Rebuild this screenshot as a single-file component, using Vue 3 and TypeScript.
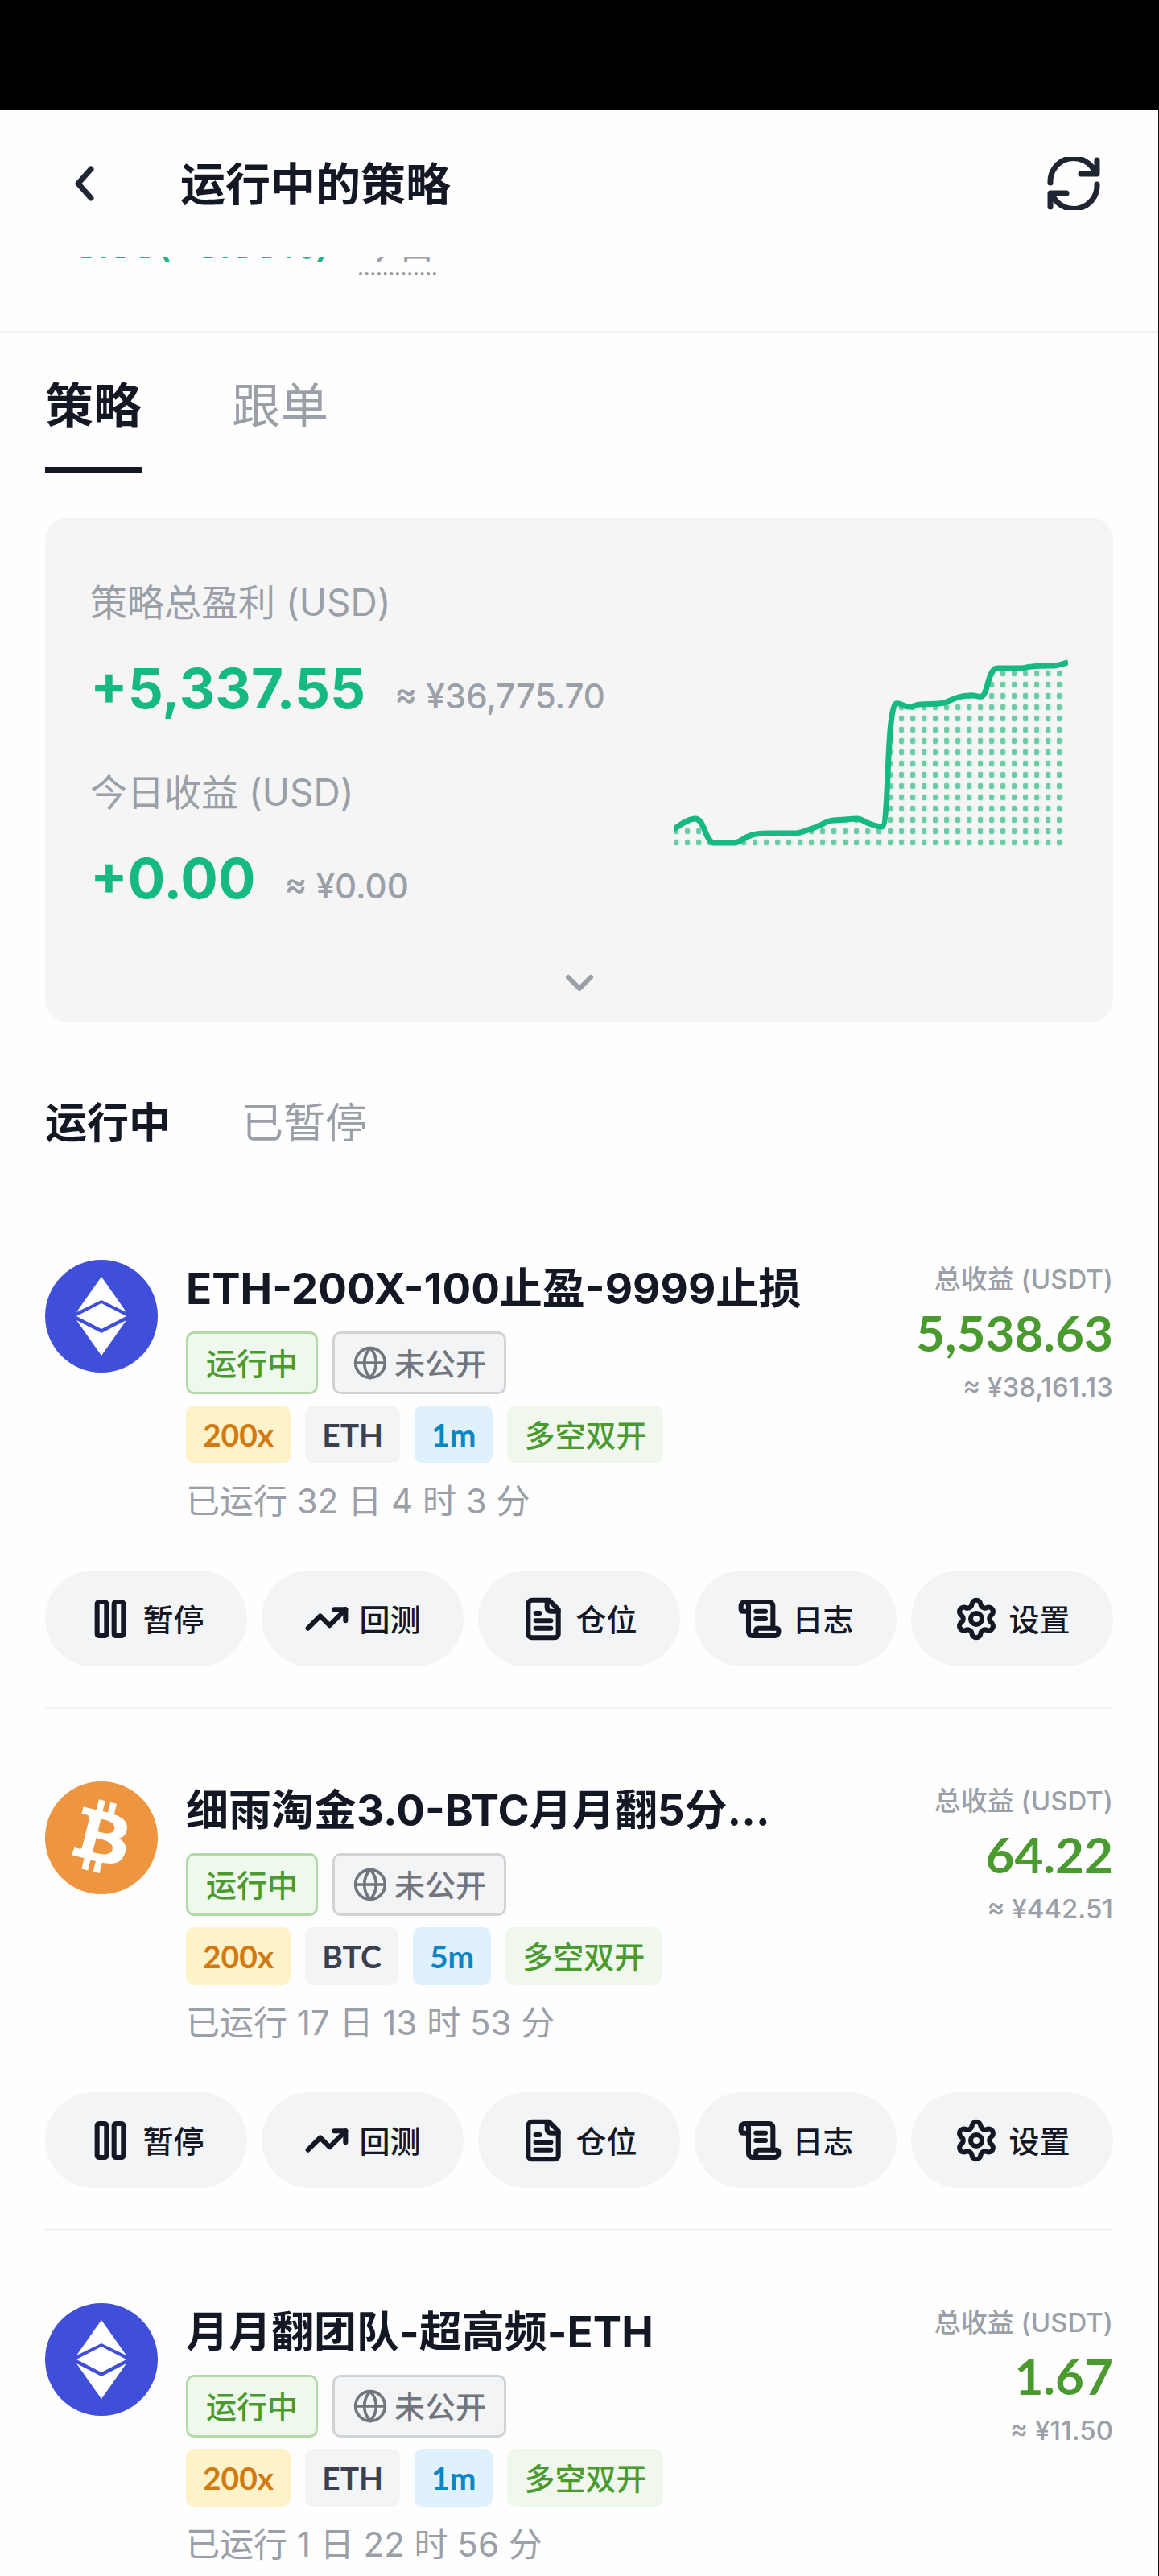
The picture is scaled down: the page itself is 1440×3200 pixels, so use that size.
<script setup lang="ts">
import { ref } from 'vue'

type Coin = 'ETH' | 'BTC'

interface Strategy {
  name: string
  coin: Coin
  leverage: string
  period: string
  runtime: string
  profit: string
  cny: string
  showActions: boolean
}

interface Action {
  label: string
  paths: string[]
}

const mainTabs = ['策略', '跟单']
const stateTabs = ['运行中', '已暂停']
const mainTab = ref('策略')
const stateTab = ref('运行中')

const totals = [
  { label: '策略总盈利 (USD)', value: '+5,337.55', cny: '≈ ¥36,775.70' },
  { label: '今日收益 (USD)', value: '+0.00', cny: '≈ ¥0.00' },
]

const strategies: Strategy[] = [
  {
    name: 'ETH-200X-100止盈-9999止损',
    coin: 'ETH',
    leverage: '200x',
    period: '1m',
    runtime: '已运行 32 日 4 时 3 分',
    profit: '5,538.63',
    cny: '≈ ¥38,161.13',
    showActions: true,
  },
  {
    name: '细雨淘金3.0-BTC月月翻5分...',
    coin: 'BTC',
    leverage: '200x',
    period: '5m',
    runtime: '已运行 17 日 13 时 53 分',
    profit: '64.22',
    cny: '≈ ¥442.51',
    showActions: true,
  },
  {
    name: '月月翻团队-超高频-ETH',
    coin: 'ETH',
    leverage: '200x',
    period: '1m',
    runtime: '已运行 1 日 22 时 56 分',
    profit: '1.67',
    cny: '≈ ¥11.50',
    showActions: false,
  },
]

const actions: Action[] = [
  {
    label: '暂停',
    paths: [
      'M6 3h3a1 1 0 0 1 1 1v16a1 1 0 0 1-1 1H6a1 1 0 0 1-1-1V4a1 1 0 0 1 1-1z',
      'M15 3h3a1 1 0 0 1 1 1v16a1 1 0 0 1-1 1h-3a1 1 0 0 1-1-1V4a1 1 0 0 1 1-1z',
    ],
  },
  { label: '回测', paths: ['M16 7h6v6', 'm22 7-8.5 8.5-5-5L2 17'] },
  {
    label: '仓位',
    paths: [
      'M15 2H6a2 2 0 0 0-2 2v16a2 2 0 0 0 2 2h12a2 2 0 0 0 2-2V7Z',
      'M14 2v4a2 2 0 0 0 2 2h4',
      'M10 9H8',
      'M16 13H8',
      'M16 17H8',
    ],
  },
  {
    label: '日志',
    paths: [
      'M15 12h-5',
      'M15 8h-5',
      'M19 17V5a2 2 0 0 0-2-2H4',
      'M8 21h12a2 2 0 0 0 2-2v-1a1 1 0 0 0-1-1H11a1 1 0 0 0-1 1v1a2 2 0 1 1-4 0V5a2 2 0 1 0-4 0v2a1 1 0 0 0 1 1h3',
    ],
  },
  {
    label: '设置',
    paths: [
      'M9.671 4.136a2.34 2.34 0 0 1 4.659 0 2.34 2.34 0 0 0 3.319 1.915 2.34 2.34 0 0 1 2.33 4.033 2.34 2.34 0 0 0 0 3.831 2.34 2.34 0 0 1-2.33 4.033 2.34 2.34 0 0 0-3.319 1.915 2.34 2.34 0 0 1-4.659 0 2.34 2.34 0 0 0-3.32-1.915 2.34 2.34 0 0 1-2.33-4.033 2.34 2.34 0 0 0 0-3.831A2.34 2.34 0 0 1 6.35 6.051a2.34 2.34 0 0 0 3.319-1.915',
      'M15 12a3 3 0 1 1-6 0 3 3 0 0 1 6 0z',
    ],
  },
]

const trendLine =
  'M0 195C8 190 18 182 27 182C38 182 39 209 49 212H75C83 212 86 205 98 202C105 200 112 200 118 200H153C160 199 166 196 175 193C184 190 191 184 198 184C210 184 220 182 228 182C234 182 238 187 243 188C248 190 254 192 259 192C268 190 264 48 276 39C281 37 285 43 292 43C299 43 300 40 306 40C318 39 328 40 336 38C342 36 345 34 351 32C357 30 361 29 367 29C374 28 378 31 383 30C391 26 390 -4 402 -5H432C436 -5 440 -7 445 -7C455 -8 465 -8 473 -8C480 -9 485 -11 490 -12'
</script>

<template>
  <div class="page">
    <div class="status-bar"></div>

    <header class="header">
      <button class="icon-button back" type="button" aria-label="返回">
        <svg viewBox="0 0 32 48" width="32" height="48" fill="none">
          <path d="M25 6 9 24l16 18" />
        </svg>
      </button>
      <h1 class="title">运行中的策略</h1>
      <button class="icon-button refresh" type="button" aria-label="刷新">
        <svg viewBox="0 0 66 66" width="66" height="66" fill="none">
          <path d="M4 32A29 29 0 0 1 60 20M62 4v17H42" />
          <path d="M62 34A29 29 0 0 1 6 46M4 62V45h20" />
        </svg>
      </button>
    </header>

    <section class="today">
      <p class="today-line">
        <span class="today-value">0.00(+0.00%)</span>
        <span class="today-label">今日</span>
      </p>
    </section>

    <main class="content">
      <nav class="main-tabs">
        <button
          v-for="tab in mainTabs"
          :key="tab"
          type="button"
          class="main-tab"
          :class="{ active: tab === mainTab }"
          @click="mainTab = tab"
        >
          {{ tab }}
        </button>
      </nav>

      <section class="summary">
        <div class="summary-body">
          <dl class="totals">
            <div v-for="total in totals" :key="total.label" class="total">
              <dt>{{ total.label }}</dt>
              <dd>
                <strong>{{ total.value }}</strong>
                <span>{{ total.cny }}</span>
              </dd>
            </div>
          </dl>
          <svg class="chart" viewBox="0 -18 490 234" fill="none" aria-hidden="true">
            <defs>
              <pattern id="dots" x="0" y="-7" width="14" height="14" patternUnits="userSpaceOnUse">
                <rect x="-1" y="4" width="9" height="9" rx="4" fill="#d3f1e5" />
                <rect x="0" y="5" width="6" height="7" rx="2" fill="#6ccaa5" />
              </pattern>
            </defs>
            <path :d="`${trendLine}V216H0Z`" fill="url(#dots)" />
            <path :d="trendLine" stroke="#16b981" stroke-width="7" />
          </svg>
        </div>
        <button class="icon-button expand" type="button" aria-label="展开">
          <svg viewBox="0 0 40 28" width="40" height="28" fill="none">
            <path d="m6 6 14 14L34 6" />
          </svg>
        </button>
      </section>

      <nav class="state-tabs">
        <button
          v-for="tab in stateTabs"
          :key="tab"
          type="button"
          class="state-tab"
          :class="{ active: tab === stateTab }"
          @click="stateTab = tab"
        >
          {{ tab }}
        </button>
      </nav>

      <ul class="list">
        <li v-for="item in strategies" :key="item.name" class="strategy">
          <div class="overview">
            <svg v-if="item.coin === 'ETH'" class="coin" viewBox="0 0 140 140" aria-hidden="true">
              <circle cx="70" cy="70" r="70" fill="#404fd9" />
              <g fill="#fff">
                <path d="M70 21 101 65 70 50 39 65Z" />
                <path d="M70 54 101 70 70 86 39 70Z" />
                <path d="M39 75 70 91 101 75 70 119Z" />
              </g>
            </svg>
            <svg v-else class="coin" viewBox="0 0 32 32" aria-hidden="true">
              <circle cx="16" cy="16" r="16" fill="#ee953f" />
              <path
                fill="#fff"
                transform="translate(-1.1 -1.2) scale(1.05)"
                d="M23.189 14.02c.314-2.096-1.283-3.223-3.465-3.975l.708-2.84-1.728-.43-.69 2.765c-.454-.114-.92-.22-1.385-.326l.695-2.783L15.596 6l-.708 2.839c-.376-.086-.746-.17-1.104-.26l.002-.009-2.384-.595-.46 1.846s1.283.294 1.256.312c.7.175.826.638.805 1.006l-.806 3.235c.048.012.11.03.18.057l-.183-.045-1.13 4.532c-.086.212-.303.531-.793.41.018.025-1.256-.313-1.256-.313l-.858 1.978 2.25.561c.418.105.828.215 1.231.318l-.715 2.872 1.727.43.708-2.84c.472.127.93.245 1.378.357l-.706 2.828 1.728.43.715-2.866c2.948.558 5.164.333 6.097-2.333.752-2.146-.037-3.385-1.588-4.192 1.13-.26 1.98-1.003 2.207-2.538zm-3.95 5.538c-.533 2.147-4.148.986-5.32.695l.95-3.805c1.172.293 4.929.872 4.37 3.11zm.535-5.569c-.487 1.953-3.495.96-4.47.717l.86-3.45c.975.243 4.118.696 3.61 2.733z"
              />
            </svg>

            <div class="details">
              <h2 class="name">{{ item.name }}</h2>
              <div class="tags status-tags">
                <span class="tag outlined running">运行中</span>
                <span class="tag outlined private">
                  <svg class="globe" viewBox="0 0 24 24" fill="none" aria-hidden="true">
                    <circle cx="12" cy="12" r="10" />
                    <path d="M12 2a14.5 14.5 0 0 0 0 20 14.5 14.5 0 0 0 0-20M2 12h20" />
                  </svg>
                  未公开
                </span>
              </div>
              <div class="tags">
                <span class="tag leverage">{{ item.leverage }}</span>
                <span class="tag symbol">{{ item.coin }}</span>
                <span class="tag period">{{ item.period }}</span>
                <span class="tag both">多空双开</span>
              </div>
              <p class="runtime">{{ item.runtime }}</p>
            </div>

            <div class="profit">
              <span class="profit-label">总收益 (USDT)</span>
              <strong class="profit-value">{{ item.profit }}</strong>
              <span class="profit-cny">{{ item.cny }}</span>
            </div>
          </div>

          <div v-if="item.showActions" class="actions">
            <button v-for="action in actions" :key="action.label" type="button" class="action">
              <svg viewBox="0 0 24 24" fill="none" aria-hidden="true">
                <path v-for="d in action.paths" :key="d" :d="d" />
              </svg>
              {{ action.label }}
            </button>
          </div>
        </li>
      </ul>
    </main>
  </div>
</template>

<style>
body {
  background: #fff;
}
</style>

<style scoped>
.page {
  box-sizing: border-box;
  min-height: 100vh;
  border-right: 1px solid #111;
  background: #fefefe;
  color: #141824;
  font-family: Lato, 'Noto Sans CJK SC', sans-serif;
}

h1,
h2,
p,
ul,
dl,
dd {
  margin: 0;
  padding: 0;
}

button {
  margin: 0;
  padding: 0;
  border: 0;
  background: none;
  color: inherit;
  font: inherit;
  cursor: pointer;
}

.status-bar {
  height: 137px;
  margin-right: -1px;
  background: #000;
}

.header {
  display: flex;
  align-items: center;
  height: 182px;
  padding: 0 72px 0 88px;
}

.icon-button {
  display: flex;
  align-items: center;
  justify-content: center;
}

.icon-button path {
  stroke: #1f2533;
  stroke-width: 7;
  stroke-linecap: round;
  stroke-linejoin: round;
}

.title {
  flex: 1;
  margin-left: 104px;
  font-size: 56px;
  line-height: 64px;
  font-weight: 700;
}

.today-line,
.totals,
.name,
.runtime,
.profit-label,
.profit-cny {
  font-family: Inter, 'Noto Sans CJK SC', sans-serif;
}

.today {
  height: 92px;
  overflow: hidden;
  border-bottom: 3px solid #f2f2f2;
}

.today-line {
  display: flex;
  align-items: baseline;
  gap: 36px;
  margin-top: -43px;
  padding-left: 92px;
  font-size: 48px;
  line-height: 56px;
}

.today-value {
  color: #1fb584;
  font-size: 46px;
  font-weight: 600;
}

.today-label {
  padding-bottom: 6px;
  border-bottom: 4px dotted #9a9ca1;
  color: #9b9fa8;
}

.content {
  padding: 0 56px;
}

.main-tabs {
  display: flex;
  gap: 112px;
  padding-top: 48px;
}

.main-tab {
  height: 125px;
  padding-bottom: 36px;
  border-bottom: 7px solid transparent;
  color: #9b9fa8;
  font-size: 60px;
  line-height: 82px;
}

.main-tab.active {
  border-bottom-color: #141824;
  color: #141824;
  font-weight: 700;
}

.summary {
  display: flex;
  flex-direction: column;
  box-sizing: border-box;
  height: 627px;
  margin-top: 56px;
  padding: 72px 56px 34px;
  border-radius: 28px;
  background: #f5f5f5;
}

.summary-body {
  display: flex;
  flex: 1;
  justify-content: space-between;
}

.total {
  height: 236px;
}

.total dt {
  color: #9b9fa8;
  font-size: 46px;
  line-height: 66px;
}

.total dd {
  display: flex;
  align-items: baseline;
  gap: 36px;
  margin-top: 30px;
  line-height: 88px;
  white-space: nowrap;
}

.total strong {
  color: #16b981;
  font-size: 69px;
  font-weight: 700;
}

.total span {
  color: #9b9fa8;
  font-size: 42px;
  font-weight: 500;
}

.chart {
  width: 490px;
  height: 234px;
  margin-top: 102px;
}

.expand {
  align-self: center;
}

.expand path {
  stroke: #9b9fa8;
  stroke-width: 6;
}

.state-tabs {
  display: flex;
  gap: 88px;
  margin-top: 92px;
}

.state-tab {
  color: #9b9fa8;
  font-size: 52px;
  line-height: 64px;
}

.state-tab.active {
  color: #141824;
  font-weight: 700;
}

.list {
  margin-top: 139px;
  list-style: none;
}

.strategy {
  padding-bottom: 50px;
}

.strategy:last-child {
  padding-bottom: 0;
}

.strategy + .strategy {
  padding-top: 90px;
  border-top: 3px solid #f4f4f5;
}

.overview {
  display: flex;
  align-items: flex-start;
}

.coin {
  flex: none;
  width: 140px;
  height: 140px;
}

.details {
  flex: 1;
  min-width: 0;
  margin-left: 35px;
}

.name {
  font-size: 53px;
  line-height: 72px;
  font-weight: 700;
  white-space: nowrap;
}

.tags {
  display: flex;
  gap: 18px;
  margin-top: 14px;
}

.status-tags {
  margin-top: 17px;
}

.tag {
  display: flex;
  align-items: center;
  box-sizing: border-box;
  height: 72px;
  padding: 0 21px;
  border-radius: 10px;
  font-size: 39px;
  font-weight: 700;
  line-height: 56px;
  white-space: nowrap;
}

.outlined {
  height: 78px;
  padding: 0 22px;
  border: 3px solid;
  font-size: 38px;
  font-weight: 500;
}

.running {
  border-color: #b3daa4;
  background: #eff8ed;
  color: #4b9a2f;
}

.private {
  gap: 8px;
  border-color: #d0d3d6;
  background: #f3f4f6;
  color: #70757e;
}

.globe {
  width: 44px;
  height: 44px;
  stroke: currentColor;
  stroke-width: 2;
}

.leverage {
  background: #fdf2c8;
  color: #d17a12;
}

.symbol {
  background: #f3f4f6;
  color: #3b404f;
}

.period {
  background: #dff1fd;
  color: #0c86c2;
}

.both {
  background: #f0f8ee;
  color: #4b9a2f;
  font-size: 38px;
  font-weight: 500;
}

.runtime {
  margin-top: 17px;
  color: #9b9fa8;
  font-size: 42px;
  line-height: 60px;
}

.profit {
  display: flex;
  flex-direction: column;
  align-items: flex-end;
  color: #9b9fa8;
  font-size: 33px;
  font-weight: 500;
  line-height: 48px;
}

.profit-value {
  margin: 2px 0 4px;
  color: #4b9a2f;
  font-size: 62px;
  font-weight: 700;
  line-height: 80px;
}

.actions {
  display: grid;
  grid-template-columns: repeat(5, 1fr);
  gap: 18px;
  margin-top: 56px;
}

.action {
  display: flex;
  align-items: center;
  justify-content: center;
  gap: 12px;
  height: 119px;
  border-radius: 60px;
  background: #f3f4f6;
  font-size: 38px;
  font-weight: 500;
  line-height: 56px;
}

.action svg {
  width: 56px;
  height: 56px;
  stroke: currentColor;
  stroke-width: 2.6;
  stroke-linecap: round;
  stroke-linejoin: round;
}
</style>
